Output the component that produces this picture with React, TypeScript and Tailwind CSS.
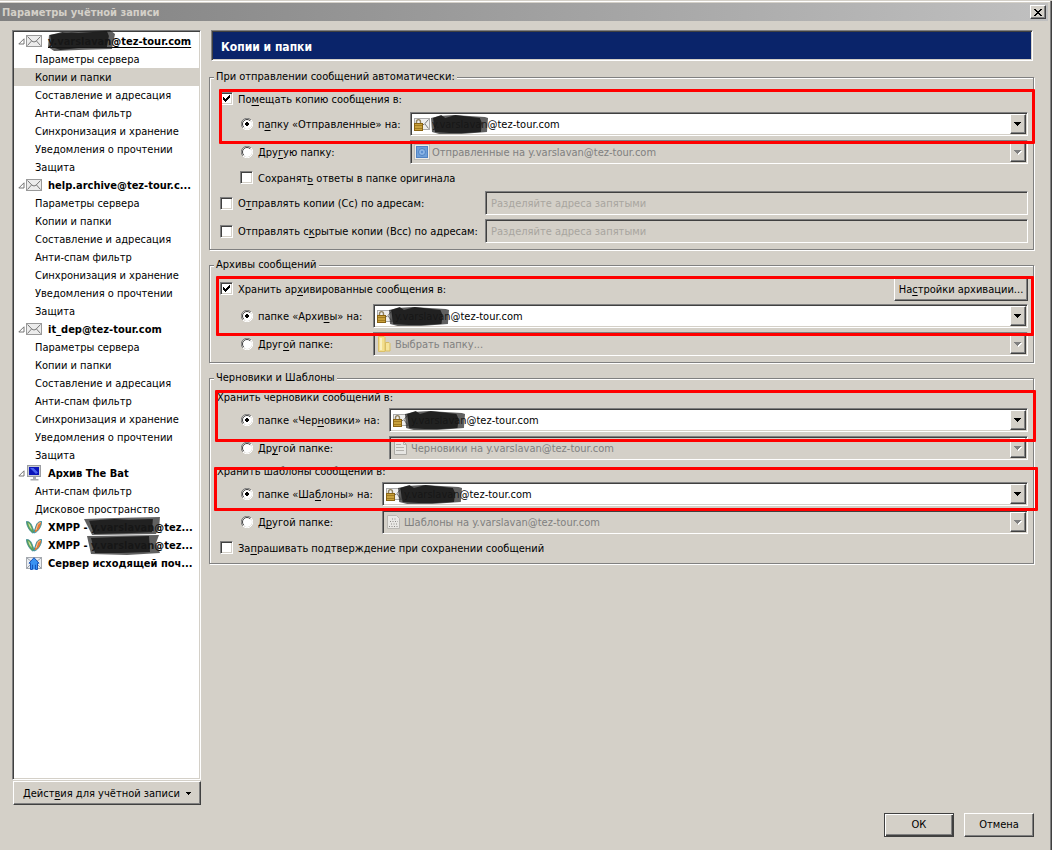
import { useState, type ReactNode } from "react";

const sunken =
  "border border-t-[#808080] border-l-[#808080] border-b-white border-r-white shadow-[inset_1px_1px_0_#404040,inset_-1px_-1px_0_#d4d0c8]";
const raised =
  "border border-t-white border-l-white border-b-[#404040] border-r-[#404040] shadow-[inset_-1px_-1px_0_#808080] bg-[#d4d0c8]";

/* Renders "_x" as an underlined access key. */
function Keyed({ text }: { text: string }) {
  const i = text.indexOf("_");
  return (
    <span className="pt-0.5">
      {i < 0 ? (
        text
      ) : (
        <>
          {text.slice(0, i)}
          <u className="underline-offset-2">{text[i + 1]}</u>
          {text.slice(i + 2)}
        </>
      )}
    </span>
  );
}

function Check({ text, checked = false }: { text: string; checked?: boolean }) {
  return (
    <label className="flex items-center gap-[5px] whitespace-nowrap">
      <span className="grid">
        <input
          type="checkbox"
          defaultChecked={checked}
          className={`peer col-start-1 row-start-1 size-[13px] appearance-none bg-white ${sunken}`}
        />
        <svg
          viewBox="0 0 13 13"
          className="pointer-events-none invisible col-start-1 row-start-1 size-[13px] peer-checked:visible"
          shapeRendering="crispEdges"
        >
          <path d="M3 5h1v1h1v1h1v-1h1v-1h1v-1h1v-1h1v3h-1v1h-1v1h-1v1h-1v1h-1v-1h-1v-1h-1z" />
        </svg>
      </span>
      <Keyed text={text} />
    </label>
  );
}

function Radio({ text, name, checked = false }: { text: string; name: string; checked?: boolean }) {
  return (
    <label className="flex items-center gap-[5px] whitespace-nowrap">
      <span className="grid">
        <input
          type="radio"
          name={name}
          defaultChecked={checked}
          className="peer col-start-1 row-start-1 size-3 appearance-none rounded-full"
        />
        <svg viewBox="0 0 12 12" className="pointer-events-none col-start-1 row-start-1 size-3">
          <circle cx="6" cy="6" r="5" fill="#fff" />
          <path d="M1.9 10.1A5.6 5.6 0 0 1 10.1 1.9" fill="none" stroke="#808080" />
          <path d="M2.8 9.2A4.5 4.5 0 0 1 9.2 2.8" fill="none" stroke="#404040" />
          <path d="M10.1 1.9A5.6 5.6 0 0 1 1.9 10.1" fill="none" stroke="#fff" />
        </svg>
        <svg
          viewBox="0 0 12 12"
          className="pointer-events-none invisible col-start-1 row-start-1 size-3 peer-checked:visible"
        >
          <path d="M5 4h2v1h1v2h-1v1h-2v-1h-1v-2h1z" shapeRendering="crispEdges" />
        </svg>
      </span>
      <Keyed text={text} />
    </label>
  );
}

function Envelope() {
  return (
    <svg viewBox="0 0 16 12" className="h-3 w-4 shrink-0">
      <rect x=".5" y=".5" width="15" height="11" fill="#ececec" stroke="#999" />
      <path d="M1.5 1.5L6 6.2q2 1.6 4 0L14.5 1.5M1.5 10.5L5.5 6M14.5 10.5L10.5 6" fill="none" stroke="#777" />
    </svg>
  );
}

function LockedMail() {
  return (
    <svg viewBox="0 0 16 16" className="size-4">
      <rect x=".5" y="2.5" width="15" height="11" fill="#eee" stroke="#aaa" />
      <path d="M9 8.5q1 .5 2-1L14.500 3.500M11 8l3.500 4.500" fill="none" stroke="#777" />
      <path d="M2.500 8V6a2 2.400 0 0 1 4 0V8" fill="none" stroke="#8f8160" strokeWidth="1.4" />
      <rect x=".5" y="7.500" width="8" height="7" fill="#c9a13c" stroke="#8a6414" />
      <path d="M1 9.500h7M1 12.500h7" stroke="#a27b22" />
    </svg>
  );
}

function StampIcon() {
  return (
    <svg viewBox="0 0 16 16" className="size-4">
      <rect x=".5" y=".5" width="15" height="15" fill="#ecebe8" stroke="#9d9c98" strokeDasharray="1 1" />
      <rect x="2.500" y="2.500" width="11" height="11" fill="#6f9fd8" stroke="#4f83c4" />
      <circle cx="8" cy="8" r="3.500" fill="#8db6e6" stroke="#4f83c4" />
      <circle cx="8" cy="8" r="1.200" fill="#5b8fd0" />
    </svg>
  );
}

function FolderIcon() {
  return (
    <svg viewBox="0 0 16 16" className="size-4">
      <path d="M1.500.5H7l1 1v14H1.500z" fill="#f3df8e" stroke="#dcc069" />
      <path d="M8.500 6.500h3.500l1 1v7.500H8.500z" fill="#f5e49c" stroke="#d9bd62" />
      <path d="M3 2h2v12H3z" fill="#faf0bf" />
    </svg>
  );
}

function DraftIcon() {
  return (
    <svg viewBox="0 0 16 16" className="size-4">
      <path d="M1.500 1.500h9l3 3v10h-12z" fill="#e6e5e2" stroke="#aaa8a3" />
      <path d="M10.500 1.500v3h3M3 7.500h8M3 10.500h8M3 4.500h5" fill="none" stroke="#b2b0ab" />
    </svg>
  );
}

function TemplateIcon() {
  return (
    <svg viewBox="0 0 16 16" className="size-4">
      <path d="M1.500 1.500h9l3 3v10h-12z" fill="#e9e8e5" stroke="#bab8b3" />
      <path d="M6 5h4M4 7.500h8M5 10h7M3 12.500h9" stroke="#8d8b87" strokeDasharray="1 1.500" />
    </svg>
  );
}

function ComputerIcon() {
  return (
    <svg viewBox="0 0 16 16" className="size-4 shrink-0">
      <rect x="1.500" y=".5" width="13" height="11" fill="#c9ccd2" stroke="#9a9ca2" />
      <rect x="3" y="2" width="10" height="8" fill="#0a14b8" />
      <path d="M4 3h3.500l4.500 4.500-2 1.500z" fill="#4a62f0" />
      <path d="M7 12h3v2h2.500v1.500H4.500V14H7z" fill="#a9abb0" />
    </svg>
  );
}

function XmppIcon() {
  return (
    <svg viewBox="0 0 16 14" className="h-3.5 w-4 shrink-0">
      <path d="M.3 1.500C3 1.200 5 3 6 6l2.300 6-1.600 1C3.500 11 .8 6.500.3 1.500z" fill="#5fa35a" stroke="#2f8196" strokeWidth=".7" />
      <path d="M2.200 3C4 4 5.200 7 6 10 4 8 2.800 6 2.200 3z" fill="#d9e4a0" />
      <path d="M15.700 1.500C13 1.200 10.800 2.800 10 6L7.700 13l1.600-.4C12.500 11 15.500 6.500 15.700 1.500z" fill="#e87a33" stroke="#2a93a8" strokeWidth=".9" />
      <path d="M14.500 2.500C12.500 3 11.500 5 11 7l-1 3" fill="none" stroke="#ffe6cf" strokeWidth=".7" />
    </svg>
  );
}

function OutgoingIcon() {
  return (
    <svg viewBox="0 0 16 13" className="h-[13px] w-4 shrink-0">
      <rect x=".5" y=".5" width="15" height="11" fill="#e9edf2" stroke="#a5a9af" />
      <path d="M1 1l5 4M15 1l-5 4M1 11l4-4M15 11l-4-4" stroke="#9aa0a8" />
      <path d="M8 .7l5 5.500h-1.500v6.300h-2V8h-3v4.500h-2V6.200H3z" fill="#3a92f2" stroke="#0b48b4" strokeWidth=".9" />
      <rect x="7" y="6" width="2" height="6.500" fill="#3a92f2" />
    </svg>
  );
}

type BlotShape = "wide" | "tall" | "flag" | "block";
const blots: Record<BlotShape, { box: string; haze: string; core: string }> = {
  wide: {
    box: "0 0 56 21",
    haze: "M0 4L8 2 22 1 53 3 56 4 55 18 30 20 8 20 1 18z",
    core: "M2 4L10 1 14 4 24 1 48 4 50 9 49 18 34 19 18 19 4 18z",
  },
  tall: {
    box: "0 0 66 21",
    haze: "M1 5L30 1 61 0 66 4 63 19 30 20 6 21 0 17z",
    core: "M2 5L14 2 30 3 58 1 60 6 58 17 30 18 12 20 4 17z",
  },
  flag: {
    box: "0 0 76 20",
    haze: "M0 2L30 1 75 0 74 12 71 18 8 19z",
    core: "M5 4L30 2 44 3 68 2 67 16 40 17 10 18z",
  },
  block: {
    box: "0 0 74 20",
    haze: "M0 1L72 0 69 8 73 18 40 20 4 19z",
    core: "M4 3L30 2 62 1 63 17 34 18 8 18z",
  },
};

function Blot({ shape, className }: { shape: BlotShape; className: string }) {
  const { box, haze, core } = blots[shape];
  return (
    <svg viewBox={box} preserveAspectRatio="none" className={`pointer-events-none absolute ${className}`}>
      <path d={haze} fill="#222" fillOpacity=".72" strokeLinejoin="round" />
      <path d={core} fill="#161616" fillOpacity=".85" strokeLinejoin="round" />
    </svg>
  );
}

function Dropdown({
  label,
  value,
  icon,
  blot,
}: {
  label: string;
  value: string;
  icon: ReactNode;
  blot?: string;
}) {
  const disabled = !blot;
  return (
    <div className="relative h-6 min-w-0 flex-1">
      <select
        aria-label={label}
        disabled={disabled}
        className={`h-6 w-full appearance-none pt-0.5 pr-5 pl-[21px] opacity-100 outline-none ${sunken} ${
          disabled ? "bg-[#d4d0c8] text-[#808080]" : "bg-white text-black"
        }`}
      >
        <option>{value}</option>
      </select>
      <span className="pointer-events-none absolute top-1 left-1">{icon}</span>
      {blot && <Blot shape="wide" className={`top-0.5 h-[21px] ${blot}`} />}
      <span
        className={`pointer-events-none absolute top-0.5 right-0.5 flex h-5 w-4 items-center justify-center ${raised}`}
      >
        <svg viewBox="0 0 8 5" className="h-[5px] w-2" shapeRendering="crispEdges">
          {disabled && <path d="M1 1h7v1h-1v1h-1v1h-1v1h-1v-1h-1v-1h-1v-1h-1z" fill="#fff" />}
          <path d="M0 0h7v1h-1v1h-1v1h-1v1h-1v-1h-1v-1h-1v-1h-1z" fill={disabled ? "#808080" : "#000"} />
        </svg>
      </span>
    </div>
  );
}

function RadioRow({
  col,
  children,
  ...radio
}: {
  col: string;
  children: ReactNode;
  text: string;
  name: string;
  checked?: boolean;
}) {
  return (
    <div className="flex h-6 items-center pl-[21px]">
      <div className={`shrink-0 ${col}`}>
        <Radio {...radio} />
      </div>
      {children}
    </div>
  );
}

function CopyRow({ text }: { text: string }) {
  return (
    <div className="flex h-6 items-center">
      <div className="w-[265px] shrink-0">
        <Check text={text} />
      </div>
      <input
        type="text"
        aria-label={text.replace("_", "")}
        placeholder="Разделяйте адреса запятыми"
        disabled
        className={`h-6 min-w-0 flex-1 bg-[#d4d0c8] px-[5px] placeholder:text-[#a8a59f] ${sunken}`}
      />
    </div>
  );
}

function Group({ title, children }: { title: string; children: ReactNode }) {
  return (
    <fieldset className="relative min-w-0 border border-[#808080] shadow-[1px_1px_0_#fff,inset_1px_1px_0_#fff]">
      <legend className="ml-1 h-4 bg-[#d4d0c8] px-0.5 leading-4">{title}</legend>
      <div className="pr-[5px] pl-2.5">{children}</div>
    </fieldset>
  );
}

function Mark({ className }: { className: string }) {
  return <div className={`pointer-events-none absolute z-10 rounded-[1px] border-3 border-[#ff0000] ${className}`} />;
}

const accountPages = [
  "Параметры сервера",
  "Копии и папки",
  "Составление и адресация",
  "Анти-спам фильтр",
  "Синхронизация и хранение",
  "Уведомления о прочтении",
  "Защита",
];

interface Account {
  name: string;
  icon: ReactNode;
  pages: string[];
  main?: boolean;
  blot?: ReactNode;
}

const accounts: Account[] = [
  {
    name: "y.varslavan@tez-tour.com",
    icon: <Envelope />,
    pages: accountPages,
    main: true,
    blot: <Blot shape="tall" className="-top-0.5 left-[34px] h-[21px] w-[67px]" />,
  },
  { name: "help.archive@tez-tour.c...", icon: <Envelope />, pages: accountPages },
  { name: "it_dep@tez-tour.com", icon: <Envelope />, pages: accountPages },
  { name: "Архив The Bat", icon: <ComputerIcon />, pages: ["Анти-спам фильтр", "Дисковое пространство"] },
  {
    name: "XMPP - y.varslavan@tez...",
    icon: <XmppIcon />,
    pages: [],
    blot: <Blot shape="flag" className="-top-px left-[70px] h-[19px] w-[77px]" />,
  },
  {
    name: "XMPP - y.varslavan@tez...",
    icon: <XmppIcon />,
    pages: [],
    blot: <Blot shape="block" className="-top-px left-[73px] h-5 w-[74px]" />,
  },
  { name: "Сервер исходящей поч...", icon: <OutgoingIcon />, pages: [] },
];

function AccountTree() {
  const [selected, setSelected] = useState("0-1");
  return (
    <ul className={`flex-1 bg-white p-px ${sunken}`}>
      {accounts.map((account, a) => (
        <li key={a}>
          <div className="relative flex h-[18px] items-center pl-1 font-bold whitespace-nowrap">
            <span className="w-2 shrink-0">
              {account.pages.length > 0 && (
                <svg viewBox="0 0 7 7" className="size-[7px]">
                  <path d="M6 .8v5.200H.8z" fill="#fff" stroke="#666" strokeWidth=".9" />
                </svg>
              )}
            </span>
            {account.icon}
            <span className={account.main ? "ml-1.5 pt-0.5 underline underline-offset-2" : "ml-1.5 pt-0.5"}>
              {account.name}
            </span>
            {account.blot}
          </div>
          <ul>
            {account.pages.map((page, p) => (
              <li key={page}>
                <button
                  type="button"
                  onClick={() => setSelected(`${a}-${p}`)}
                  className={`flex h-[18px] w-full items-center pt-0.5 pl-[21px] leading-4 whitespace-nowrap ${
                    selected === `${a}-${p}` ? "bg-[#d4d0c8]" : ""
                  }`}
                >
                  {page}
                </button>
              </li>
            ))}
          </ul>
        </li>
      ))}
    </ul>
  );
}

export default function App() {
  return (
    <div className="flex min-h-screen flex-col overflow-hidden border-t border-[#d4d0c8] bg-[#d4d0c8] pr-1 font-['DejaVu_Sans_Condensed','DejaVu_Sans',sans-serif] text-[11px] leading-[18px] text-black shadow-[inset_-1px_0_0_#404040,inset_-2px_0_0_#808080,inset_0_1px_0_#fff]">
      <header className="mt-0.5 flex h-[18px] items-center justify-between bg-linear-to-r from-[#808080] to-[#c0c0c0] pr-0.5 pl-0.5">
        <h1 className="pt-0.5 font-bold text-[#d4d0c8]">Параметры учётной записи</h1>
        <button type="button" aria-label="Закрыть" className={`flex h-3.5 w-4 items-center justify-center ${raised}`}>
          <svg viewBox="0 0 8 7" className="h-[7px] w-2" shapeRendering="crispEdges">
            <path d="M0 0h2v1h1v1h2v-1h1v-1h2v1h-1v1h-1v1h-1v1h1v1h1v1h1v1h-2v-1h-1v-1h-2v1h-1v1h-2v-1h1v-1h1v-1h1v-1h-1v-1h-1v-1h-1z" />
          </svg>
        </button>
      </header>

      <div className="mt-[9px] flex flex-1 pr-3.5 pl-3">
        <nav className="flex w-[189px] shrink-0 flex-col gap-px">
          <AccountTree />
          <button type="button" className={`ml-px flex h-6 items-center gap-1.5 pl-[9px] whitespace-nowrap ${raised}`}>
            <Keyed text="Дейст_вия для учётной записи" />
            <svg viewBox="0 0 5 3" className="h-[3px] w-[5px]" shapeRendering="crispEdges">
              <path d="M0 0h5v1h-1v1h-1v1h-1v-1h-1v-1h-1z" />
            </svg>
          </button>
        </nav>

        <main className="ml-2 min-w-0 flex-1">
          <h2
            className={`mr-px ml-0.5 flex h-[31px] items-center bg-[#0a246a] px-[9px] pt-0.5 text-xs font-bold text-white ${sunken}`}
          >
            Копии и папки
          </h2>

          <div className="mt-2 flex flex-col gap-[7px]">
            <Group title="При отправлении сообщений автоматически:">
              <div className="flex h-[27px] items-center">
                <Check text="По_мещать копию сообщения в:" checked />
              </div>
              <div className="flex flex-col gap-1">
                <RadioRow col="w-[169px]" name="sent" text="п_апку «Отправленные» на:" checked>
                  <Dropdown
                    label="Папка «Отправленные»"
                    value="y.varslavan@tez-tour.com"
                    icon={<LockedMail />}
                    blot="left-[21px] w-[57px]"
                  />
                </RadioRow>
                <RadioRow col="w-[169px]" name="sent" text="Дру_гую папку:">
                  <Dropdown
                    label="Другая папка отправленных"
                    value="Отправленные на y.varslavan@tez-tour.com"
                    icon={<StampIcon />}
                  />
                </RadioRow>
              </div>
              <div className="flex h-[27px] items-center pl-5">
                <Check text="Сохранят_ь ответы в папке оригинала" />
              </div>
              <div className="flex flex-col gap-1 pb-1.5">
                <CopyRow text="О_тправлять копии (Cc) по адресам:" />
                <CopyRow text="Отправлять с_крытые копии (Bcc) по адресам:" />
              </div>
              <Mark className="top-1 -right-0.5 left-[9px] h-[55px]" />
            </Group>

            <Group title="Архивы сообщений">
              <div className="flex h-[31px] items-center justify-between">
                <Check text="Хранить ар_хивированные сообщения в:" checked />
                <button
                  type="button"
                  className={`flex h-6 w-[134px] items-center justify-center whitespace-nowrap ${raised}`}
                >
                  <Keyed text="На_стройки архивации..." />
                </button>
              </div>
              <div className="flex flex-col gap-1 pb-1.5">
                <RadioRow col="w-[132px]" name="archive" text="папке «Архи_вы» на:" checked>
                  <Dropdown
                    label="Папка «Архивы»"
                    value="y.varslavan@tez-tour.com"
                    icon={<LockedMail />}
                    blot="left-4 w-[60px]"
                  />
                </RadioRow>
                <RadioRow col="w-[132px]" name="archive" text="Друг_ой папке:">
                  <Dropdown label="Другая папка архивов" value="Выбрать папку..." icon={<FolderIcon />} />
                </RadioRow>
              </div>
              <Mark className="top-[3px] -right-px left-1.5 h-[60px]" />
            </Group>

            <Group title="Черновики и Шаблоны">
              <p className="-ml-[3px] h-[22px] leading-6">Хранить черновики сообщений в:</p>
              <div className="flex flex-col gap-1">
                <RadioRow col="w-[148px]" name="drafts" text="папке «Чер_новики» на:" checked>
                  <Dropdown
                    label="Папка «Черновики»"
                    value="y.varslavan@tez-tour.com"
                    icon={<LockedMail />}
                    blot="left-4 w-[60px]"
                  />
                </RadioRow>
                <RadioRow col="w-[148px]" name="drafts" text="Др_угой папке:">
                  <Dropdown
                    label="Другая папка черновиков"
                    value="Черновики на y.varslavan@tez-tour.com"
                    icon={<DraftIcon />}
                  />
                </RadioRow>
              </div>
              <p className="-ml-[3px] h-[22px] leading-6">Хранить шаблоны сообщений в:</p>
              <div className="flex flex-col gap-1">
                <RadioRow col="w-[141px]" name="templates" text="папке «Ша_блоны» на:" checked>
                  <Dropdown
                    label="Папка «Шаблоны»"
                    value="y.varslavan@tez-tour.com"
                    icon={<LockedMail />}
                    blot="left-4 w-16"
                  />
                </RadioRow>
                <RadioRow col="w-[141px]" name="templates" text="Д_ругой папке:">
                  <Dropdown
                    label="Другая папка шаблонов"
                    value="Шаблоны на y.varslavan@tez-tour.com"
                    icon={<TemplateIcon />}
                  />
                </RadioRow>
              </div>
              <div className="flex h-[29px] items-center pb-0.5">
                <Check text="За_прашивать подтверждение при сохранении сообщений" />
              </div>
              <Mark className="top-1 -right-[3px] left-[5px] h-[52px]" />
              <Mark className="top-[81px] -right-[5px] left-1 h-11" />
            </Group>
          </div>
        </main>
      </div>

      <footer className="flex justify-end gap-2.5 pt-2 pr-3.5 pb-[13px]">
        <button
          type="button"
          className="h-6 w-[70px] border border-[#404040] bg-[#d4d0c8] leading-[22px] shadow-[inset_1px_1px_0_#fff,inset_-1px_-1px_0_#404040,inset_-2px_-2px_0_#808080]"
        >
          ОК
        </button>
        <button type="button" className={`h-6 w-[70px] leading-[22px] ${raised}`}>
          Отмена
        </button>
      </footer>
    </div>
  );
}
